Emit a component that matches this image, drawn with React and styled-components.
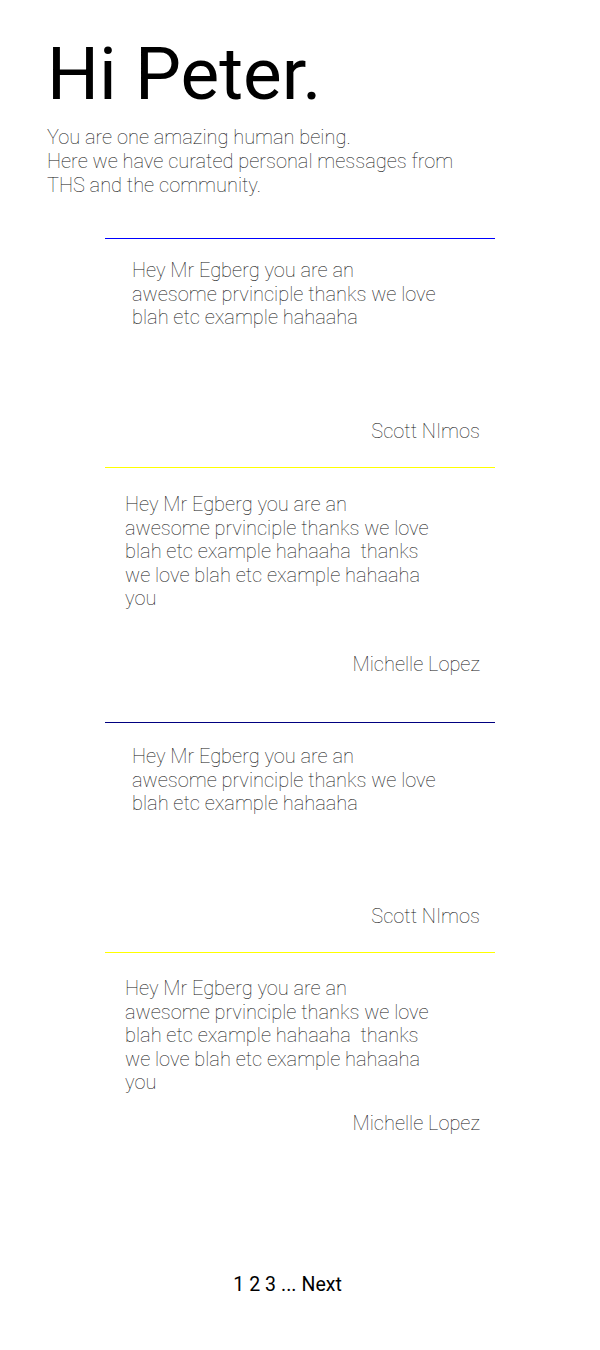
import React from "react";
import styled, { createGlobalStyle } from "styled-components";

const Global = createGlobalStyle`
  html, body { margin: 0; padding: 0; background: #fff; }
  body { font-family: Roboto, "Liberation Sans", sans-serif; color: #000; }
`;

const Page = styled.div`
  width: 600px;
  min-height: 1350px;
  display: flex;
  flex-direction: column;
`;

const Header = styled.header`
  padding: 32px 0 0 47px;
`;

const Title = styled.h1`
  margin: 0;
  font-size: 73px;
  font-weight: 400;
  line-height: 84px;
`;

const Intro = styled.p`
  margin: 9px 0 0;
  font-size: 20px;
  font-weight: 100;
  line-height: 24px;
  color: #111;
`;

const List = styled.section`
  width: 390px;
  margin: 41px auto 0;
  display: flex;
  flex-direction: column;
`;

const Card = styled.article`
  border-top: 1px solid ${(p) => p.$accent};
  padding: ${(p) => p.$padTop}px 15px ${(p) => p.$padBottom}px ${(p) => p.$indent}px;
  display: flex;
  flex-direction: column;
`;

const Message = styled.p`
  margin: 0;
  width: 308px;
  min-height: ${(p) => p.$minHeight}px;
  font-size: 20px;
  font-weight: 100;
  line-height: 23.5px;
  color: #111;
`;

const Author = styled.p`
  margin: 0;
  align-self: flex-end;
  font-size: 20px;
  font-weight: 100;
  line-height: 24px;
  color: #111;
`;

const Pager = styled.nav`
  margin-top: 138px;
  padding-right: 25px;
  display: flex;
  justify-content: center;
  gap: 5px;
  font-size: 19.5px;
  font-weight: 400;
  color: #000;
  line-height: 24px;
`;

const PageLink = styled.span`
  cursor: pointer;
`;

const short =
  "Hey Mr Egberg you are an awesome prvinciple thanks we love blah etc example hahaaha";
const long =
  "Hey Mr Egberg you are an awesome prvinciple thanks we love blah etc example hahaaha\u00a0 thanks we love blah etc example hahaaha you";

const cards = [
  { accent: "#0000ff", text: short, author: "Scott NImos", indent: 27, padTop: 20, minHeight: 160, padBottom: 24 },
  { accent: "#ffff00", text: long, author: "Michelle Lopez", indent: 20, padTop: 25, minHeight: 159, padBottom: 46 },
  { accent: "#000080", text: short, author: "Scott NImos", indent: 27, padTop: 22, minHeight: 159, padBottom: 24 },
  { accent: "#ffff00", text: long, author: "Michelle Lopez", indent: 20, padTop: 24, minHeight: 134, padBottom: 0 },
];

export default function App() {
  return (
    <Page>
      <Global />
      <Header>
        <Title>Hi Peter.</Title>
        <Intro>
          You are one amazing human being.
          <br />
          Here we have curated personal messages from
          <br />
          THS and the community.
        </Intro>
      </Header>
      <List>
        {cards.map((c, i) => (
          <Card key={i} $accent={c.accent} $indent={c.indent} $padTop={c.padTop} $padBottom={c.padBottom}>
            <Message $minHeight={c.minHeight}>{c.text}</Message>
            <Author>{c.author}</Author>
          </Card>
        ))}
      </List>
      <Pager>
        <PageLink>1</PageLink>
        <PageLink>2</PageLink>
        <PageLink>3</PageLink>
        <span>...</span>
        <PageLink>Next</PageLink>
      </Pager>
    </Page>
  );
}
